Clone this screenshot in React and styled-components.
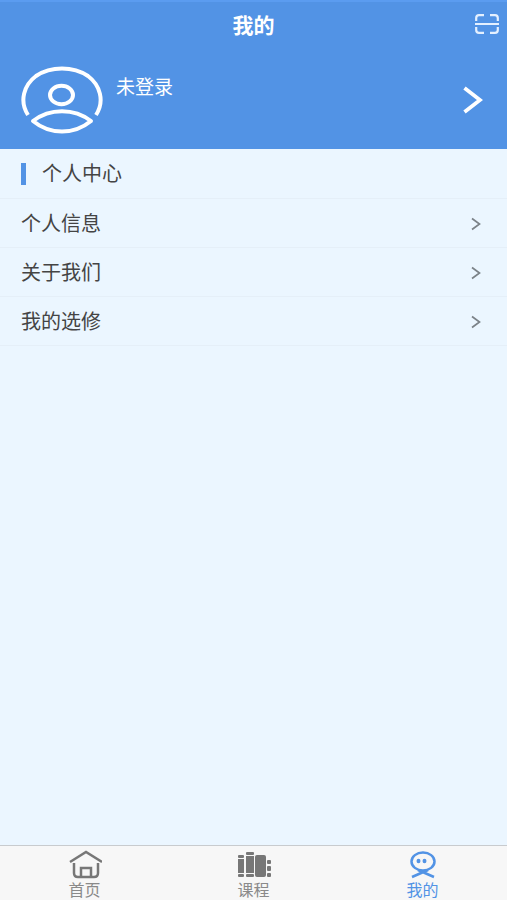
import React, { useState } from "react";
import styled, { createGlobalStyle } from "styled-components";

const GlobalStyle = createGlobalStyle`
  * {
    box-sizing: border-box;
  }

  body {
    margin: 0;
    font-family: "Liberation Sans", "Noto Sans CJK SC", sans-serif;
  }

  button {
    font-family: inherit;
    cursor: pointer;
  }
`;

const menuItems = [
  { id: "info", label: "个人信息" },
  { id: "about", label: "关于我们" },
  { id: "electives", label: "我的选修" },
];

const Page = styled.div`
  display: flex;
  flex-direction: column;
  min-height: 100vh;
  background-color: #ebf6ff;
`;

const Header = styled.header`
  background-color: #5293e5;
  border-top: 2px solid #5b9cf0;
  color: #fff;
`;

const TitleBar = styled.div`
  display: grid;
  grid-template-columns: 1fr auto 1fr;
  align-items: center;
  height: 48px;
  padding: 0 8px;
`;

const Title = styled.h1`
  grid-column: 2;
  margin: 0;
  font-size: 21px;
  line-height: 24px;
  font-weight: bold;
`;

const ScanButton = styled.button`
  display: flex;
  justify-self: end;
  padding: 0 0 4px;
  border: none;
  background: none;
  color: #e4f0ff;
`;

const Profile = styled.button`
  display: flex;
  align-items: center;
  gap: 13px;
  width: 100%;
  height: 99px;
  padding: 0 24px 0 21px;
  border: none;
  background: none;
  color: #fff;
  text-align: left;
`;

const UserName = styled.span`
  flex: 1;
  align-self: flex-start;
  padding-top: 24px;
  font-size: 19px;
  line-height: 28px;
`;

const Main = styled.main`
  flex: 1;
`;

const SectionTitle = styled.h2`
  display: flex;
  align-items: center;
  gap: 16px;
  height: 50px;
  margin: 0;
  padding: 1px 21px 0;
  border-bottom: 1px solid #e5eff8;
  color: #444;
  font-size: 20px;
  line-height: 24px;
  font-weight: normal;

  &::before {
    content: "";
    width: 5px;
    height: 22px;
    background-color: #5293e5;
  }
`;

const MenuItem = styled.button`
  display: flex;
  align-items: center;
  justify-content: space-between;
  width: 100%;
  height: 49px;
  padding: 2px 26px 0 21px;
  border: none;
  border-bottom: 1px solid #e5eff8;
  background: none;
  color: #444;
  font-size: 20px;
  line-height: 24px;

  svg {
    color: #7b8288;
  }
`;

const TabBar = styled.nav`
  position: sticky;
  bottom: 0;
  display: flex;
  height: 55px;
  border-top: 1px solid #c8cbce;
  background-color: #f7f7f7;
`;

const Tab = styled.button`
  display: flex;
  flex: 1;
  flex-direction: column;
  align-items: center;
  gap: 2px;
  padding: 4px 0 0;
  border: none;
  background: none;
  color: ${({ $active }) => ($active ? "#5293e5" : "#8a8a8a")};
  font-size: 16px;
  line-height: 18px;

  svg {
    color: ${({ $active }) => ($active ? "#5293e5" : "#777")};
  }
`;

const ScanIcon = () => (
  <svg width="24" height="20" viewBox="0 0 24 20" fill="none" stroke="currentColor" strokeWidth="2.2">
    <path d="M1.2 7V4Q1.2 1.2 4 1.2H9M15 1.2H20Q22.8 1.2 22.8 4V7M1.2 13V16Q1.2 18.8 4 18.8H9M15 18.8H20Q22.8 18.8 22.8 16V13M0 10H24" />
  </svg>
);

const AvatarIcon = () => (
  <svg width="82" height="68" viewBox="0 0 82 68" fill="none" stroke="currentColor" strokeWidth="4">
    <path d="M7 49C-2 35 3 19 15 10C30 0 52 0 67 10C79 19 84 35 75 49" />
    <ellipse cx="40.5" cy="29" rx="11.5" ry="9.2" />
    <path d="M12 55C29 42 53 42 70 55C53 69 29 69 12 55Z" strokeLinejoin="round" />
  </svg>
);

const BigChevron = () => (
  <svg width="20" height="28" viewBox="0 0 20 28" fill="none" stroke="currentColor" strokeWidth="3.8">
    <path d="M1.5 2L17 14L1.5 26" />
  </svg>
);

const SmallChevron = () => (
  <svg width="10" height="14" viewBox="0 0 10 14" fill="none" stroke="currentColor" strokeWidth="1.7">
    <path d="M1 1.5L8.5 7L1 12.5" />
  </svg>
);

const HomeIcon = () => (
  <svg width="34" height="30" viewBox="0 0 34 30" fill="none" stroke="currentColor" strokeWidth="2.5">
    <path d="M2 12L18 2L34 12M6 13V23Q6 27 10 27H26Q30 27 30 23V13M13 27V18H23V27" />
  </svg>
);

const CoursesIcon = () => (
  <svg width="34" height="30" viewBox="0 0 34 30" fill="currentColor">
    <rect x="1" y="5" width="6" height="3" rx="1" />
    <rect x="1" y="9" width="6" height="14" />
    <rect x="1" y="24" width="6" height="3" rx="1" />
    <rect x="9" y="2" width="8" height="3" rx="1" />
    <rect x="9" y="6" width="8" height="17" />
    <rect x="9" y="24" width="8" height="3" rx="1" />
    <rect x="18" y="5" width="11" height="22" rx="2" />
    <rect x="30" y="10" width="4" height="4" rx="1" />
    <rect x="30" y="16" width="4" height="5" rx="1" />
    <rect x="30" y="23" width="4" height="4" rx="1" />
  </svg>
);

const MineIcon = () => (
  <svg width="34" height="30" viewBox="0 0 34 30" fill="none" stroke="currentColor" strokeWidth="2.5">
    <ellipse cx="17" cy="11.5" rx="11.5" ry="9" />
    <path d="M6 27L22 20M28 27L12 20" />
    <ellipse cx="12.5" cy="11" rx="2" ry="2.2" fill="currentColor" stroke="none" />
    <ellipse cx="18.5" cy="11" rx="2" ry="2.2" fill="currentColor" stroke="none" />
  </svg>
);

const tabs = [
  { id: "home", label: "首页", Icon: HomeIcon },
  { id: "courses", label: "课程", Icon: CoursesIcon },
  { id: "mine", label: "我的", Icon: MineIcon },
];

export default function App() {
  const [activeTab, setActiveTab] = useState("mine");

  return (
    <>
      <GlobalStyle />
      <Page>
        <Header>
          <TitleBar>
            <Title>我的</Title>
            <ScanButton type="button" aria-label="扫一扫">
              <ScanIcon />
            </ScanButton>
          </TitleBar>
          <Profile type="button">
            <AvatarIcon />
            <UserName>未登录</UserName>
            <BigChevron />
          </Profile>
        </Header>
        <Main>
          <SectionTitle>个人中心</SectionTitle>
          {menuItems.map((item) => (
            <MenuItem key={item.id} type="button">
              {item.label}
              <SmallChevron />
            </MenuItem>
          ))}
        </Main>
        <TabBar>
          {tabs.map(({ id, label, Icon }) => (
            <Tab
              key={id}
              type="button"
              $active={activeTab === id}
              onClick={() => setActiveTab(id)}
            >
              <Icon />
              {label}
            </Tab>
          ))}
        </TabBar>
      </Page>
    </>
  );
}
